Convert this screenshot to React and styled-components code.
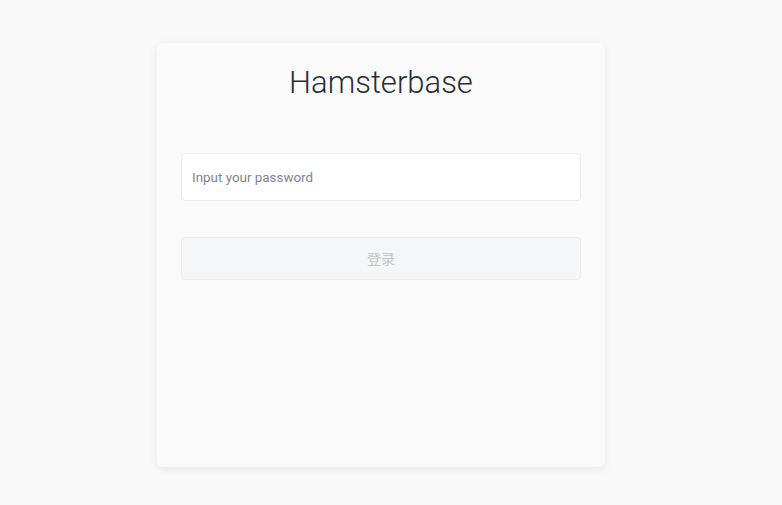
import React from 'react'
import styled, { createGlobalStyle } from 'styled-components'

const GlobalStyle = createGlobalStyle`
    html, body {
        margin: 0;
        padding: 0;
        background-color: #f9f9f9;
        font-family: 'Roboto', 'Noto Sans CJK SC', sans-serif;
    }
`;

function App() {
    return (
        <>
            <GlobalStyle />
            <Page>
                <Card>
                    <Title>Hamsterbase</Title>
                    <Form onSubmit={(e) => e.preventDefault()}>
                        <PasswordInput type="password" placeholder="Input your password" />
                        <LoginButton type="submit" disabled>登录</LoginButton>
                    </Form>
                </Card>
            </Page>
        </>
    );
}

export default App

const Page = styled.div`
    min-height: 100vh;
    display: flex;
    justify-content: center;
    align-items: flex-start;
    padding: 43px 20px 0 0;
    box-sizing: border-box;
`;

const Card = styled.div`
    width: 448px;
    height: 424px;
    box-sizing: border-box;
    padding: 22px 24px;
    background-color: #fafafa;
    border-radius: 6px;
    box-shadow: rgba(0, 0, 0, 0.08) 0px 2px 10px 0px;
`;

const Title = styled.h1`
    margin: 0;
    text-align: center;
    font-size: 31px;
    line-height: 36px;
    font-weight: 300;
    color: #2b2e33;
`;

const Form = styled.form`
    margin-top: 52px;
    display: flex;
    flex-direction: column;
    gap: 36px;
`;

const PasswordInput = styled.input`
    height: 48px;
    box-sizing: border-box;
    padding: 0 10px;
    border: 1px solid #ebebeb;
    border-radius: 4px;
    background-color: #ffffff;
    font-family: 'Roboto', sans-serif;
    font-size: 13.4px;
    color: #333;
    outline: none;

    &::placeholder {
        color: #7d8591;
    }
`;

const LoginButton = styled.button`
    height: 43px;
    padding: 0 0 2px;
    border: 1px solid #ebebeb;
    border-radius: 4px;
    background-color: #f5f6f8;
    color: #c2c4c8;
    font-family: 'Noto Sans CJK SC', sans-serif;
    font-size: 14px;
    cursor: not-allowed;
`;
